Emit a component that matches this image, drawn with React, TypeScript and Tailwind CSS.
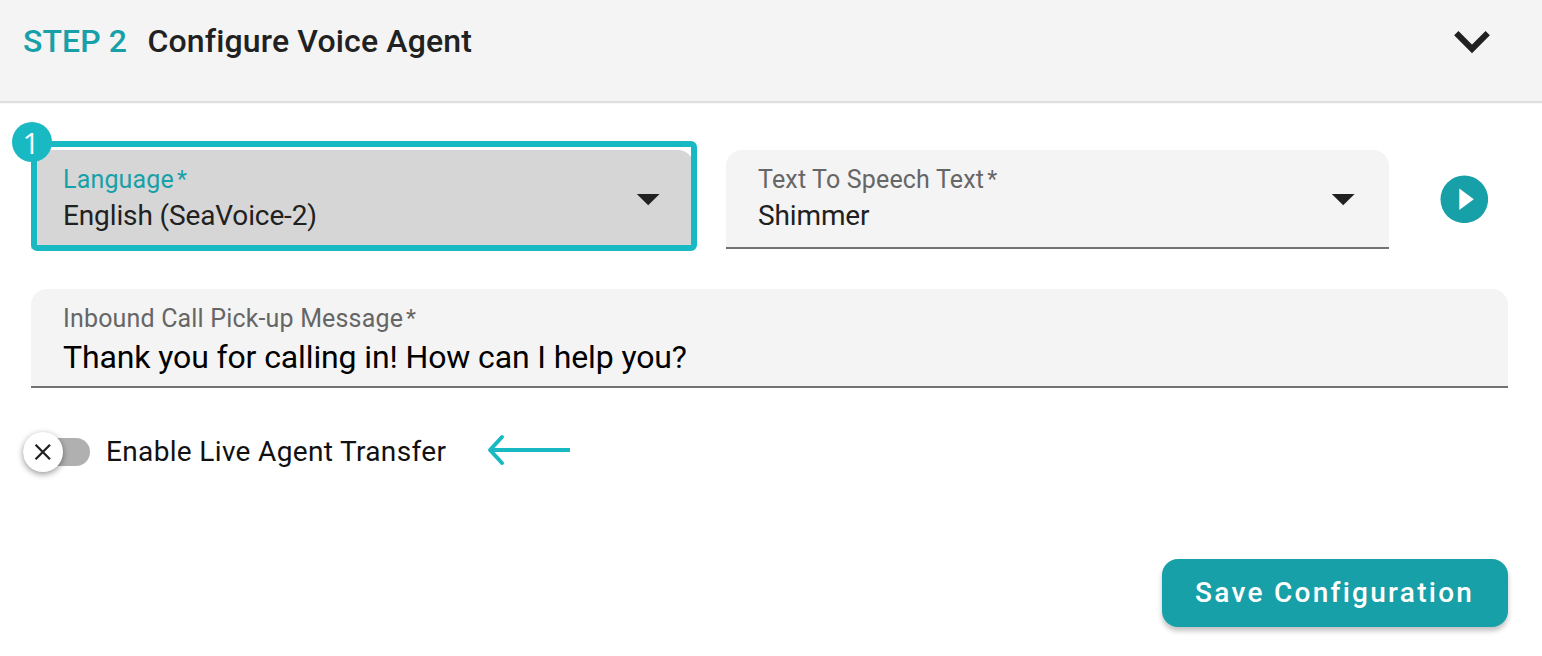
import type { ReactNode } from "react";

type FieldProps = {
  label: string;
  labelClass: string;
  className: string;
  children: ReactNode;
};

function Field({ label, labelClass, className, children }: FieldProps) {
  return (
    <div className={`flex h-[99px] flex-col rounded-t-[16px] pl-8 pt-[16px] ${className}`}>
      <div className={`flex h-7 items-center whitespace-nowrap text-[25px] tracking-[0.17px] ${labelClass}`}>
        {label}
        <span className="ml-[3px] text-[23px]">*</span>
      </div>
      {children}
    </div>
  );
}

function Caret() {
  return (
    <svg width="24" height="12" viewBox="0 0 24 12" aria-hidden="true">
      <path d="M0.8 0H23.6L12.2 11.2Z" fill="#212121" />
    </svg>
  );
}

function SelectBody({ value }: { value: string }) {
  return (
    <div className="flex h-11 items-start justify-between pr-[34px]">
      <span className="mt-[4px] whitespace-nowrap text-[28px] leading-9 tracking-[-0.13px] text-[#212121]">{value}</span>
      <Caret />
    </div>
  );
}

export default function App() {
  return (
    <div className="flex h-[656px] w-[1542px] flex-col overflow-hidden bg-white font-['Roboto',sans-serif]">
      <header className="flex h-[104px] shrink-0 items-start justify-between border-b border-[#f8f8f8] bg-[#f4f4f4] pl-[23px] pr-[52px] shadow-[inset_0_-2px_0_#dfdfdf]">
        <h1 className="flex h-[81px] items-center whitespace-nowrap text-[32px] font-medium">
          <span className="w-[124.5px] tracking-[0.1px] text-[#18a0a8]">STEP 2</span>
          <span className="tracking-[0.15px] text-[#212121]">Configure Voice Agent</span>
        </h1>
        <svg className="mt-[31px]" width="36" height="23" viewBox="0 0 36 23" aria-hidden="true">
          <path d="M2.3 2.2L18 18L33.7 2.2" fill="none" stroke="#212121" strokeWidth="6.1" />
        </svg>
      </header>

      <main className="flex flex-1 flex-col pl-[31px] pr-[34px] pt-[46px]">
        <div className="flex items-center">
          <div className="relative w-[663px]">
            <Field label="Language" labelClass="text-[#18a0a8]" className="bg-[#d6d6d6]">
              <SelectBody value="English (SeaVoice-2)" />
            </Field>
            <div className="absolute -top-[9px] left-0 h-[110px] w-[666px] rounded-[6px] border-[6px] border-[#19b9c3]" />
            <div className="absolute -left-[19px] -top-[28px] flex h-10 w-10 items-center justify-center rounded-full bg-[#19b9c3] pr-[2px] pt-[2px] font-['Open_Sans',sans-serif] text-[30px] leading-none text-white">
              1
            </div>
          </div>
          <div className="ml-8 w-[663px]">
            <Field
              label="Text To Speech Text"
              labelClass="text-[#666666]"
              className="border-b-2 border-[#727272] bg-[#f4f4f4]"
            >
              <SelectBody value="Shimmer" />
            </Field>
          </div>
          <button aria-label="Play" className="mb-px ml-[51px] h-12 w-12">
            <svg width="48" height="48" viewBox="0 0 48 48" aria-hidden="true">
              <circle cx="24.3" cy="24.3" r="23.8" fill="#18a0a8" />
              <path d="M19.3 13.5L33.8 24.3L19.3 35.1Z" fill="#fff" />
            </svg>
          </button>
        </div>

        <Field
          label="Inbound Call Pick-up Message"
          labelClass="text-[#666666]"
          className="mt-10 border-b-2 border-[#727272] bg-[#f4f4f4]"
        >
          <span className="mt-[4px] whitespace-nowrap text-[32px] leading-10 tracking-[-0.12px] text-black">
            Thank you for calling in! How can I help you?
          </span>
        </Field>

        <div className="-ml-2 mt-[44px] flex h-10 items-center">
          <div className="flex h-7 w-[67px] items-center rounded-full bg-[#b0b0b0]">
            <div className="flex h-10 w-10 shrink-0 items-center justify-center rounded-full bg-white shadow-[0_2px_6px_rgba(0,0,0,0.42)]">
              <svg width="18" height="18" viewBox="0 0 18 18" aria-hidden="true">
                <path d="M1.6 1.8L16 16.2M16 1.8L1.6 16.2" stroke="#212121" strokeWidth="2.3" />
              </svg>
            </div>
          </div>
          <span className="ml-4 w-[340px] whitespace-nowrap text-[28px] leading-10 tracking-[0.34px] text-[#111]">
            Enable Live Agent Transfer
          </span>
          <svg className="-mt-[4px] ml-[40px]" width="84" height="32" viewBox="0 0 84 32" aria-hidden="true">
            <path d="M16 3L4 16L16 29" fill="none" stroke="#19b9c3" strokeWidth="4" strokeLinecap="round" strokeLinejoin="round" />
            <path d="M4 16H84" stroke="#19b9c3" strokeWidth="4" />
          </svg>
        </div>

        <button className="mt-[87px] flex h-[68px] w-[346px] items-center self-end rounded-[16px] bg-[#18a0a8] pl-[33px] text-[28px] font-medium tracking-[2.28px] whitespace-nowrap text-white shadow-[0_4px_5px_rgba(0,0,0,0.24)]">
          Save Configuration
        </button>
      </main>
    </div>
  );
}
